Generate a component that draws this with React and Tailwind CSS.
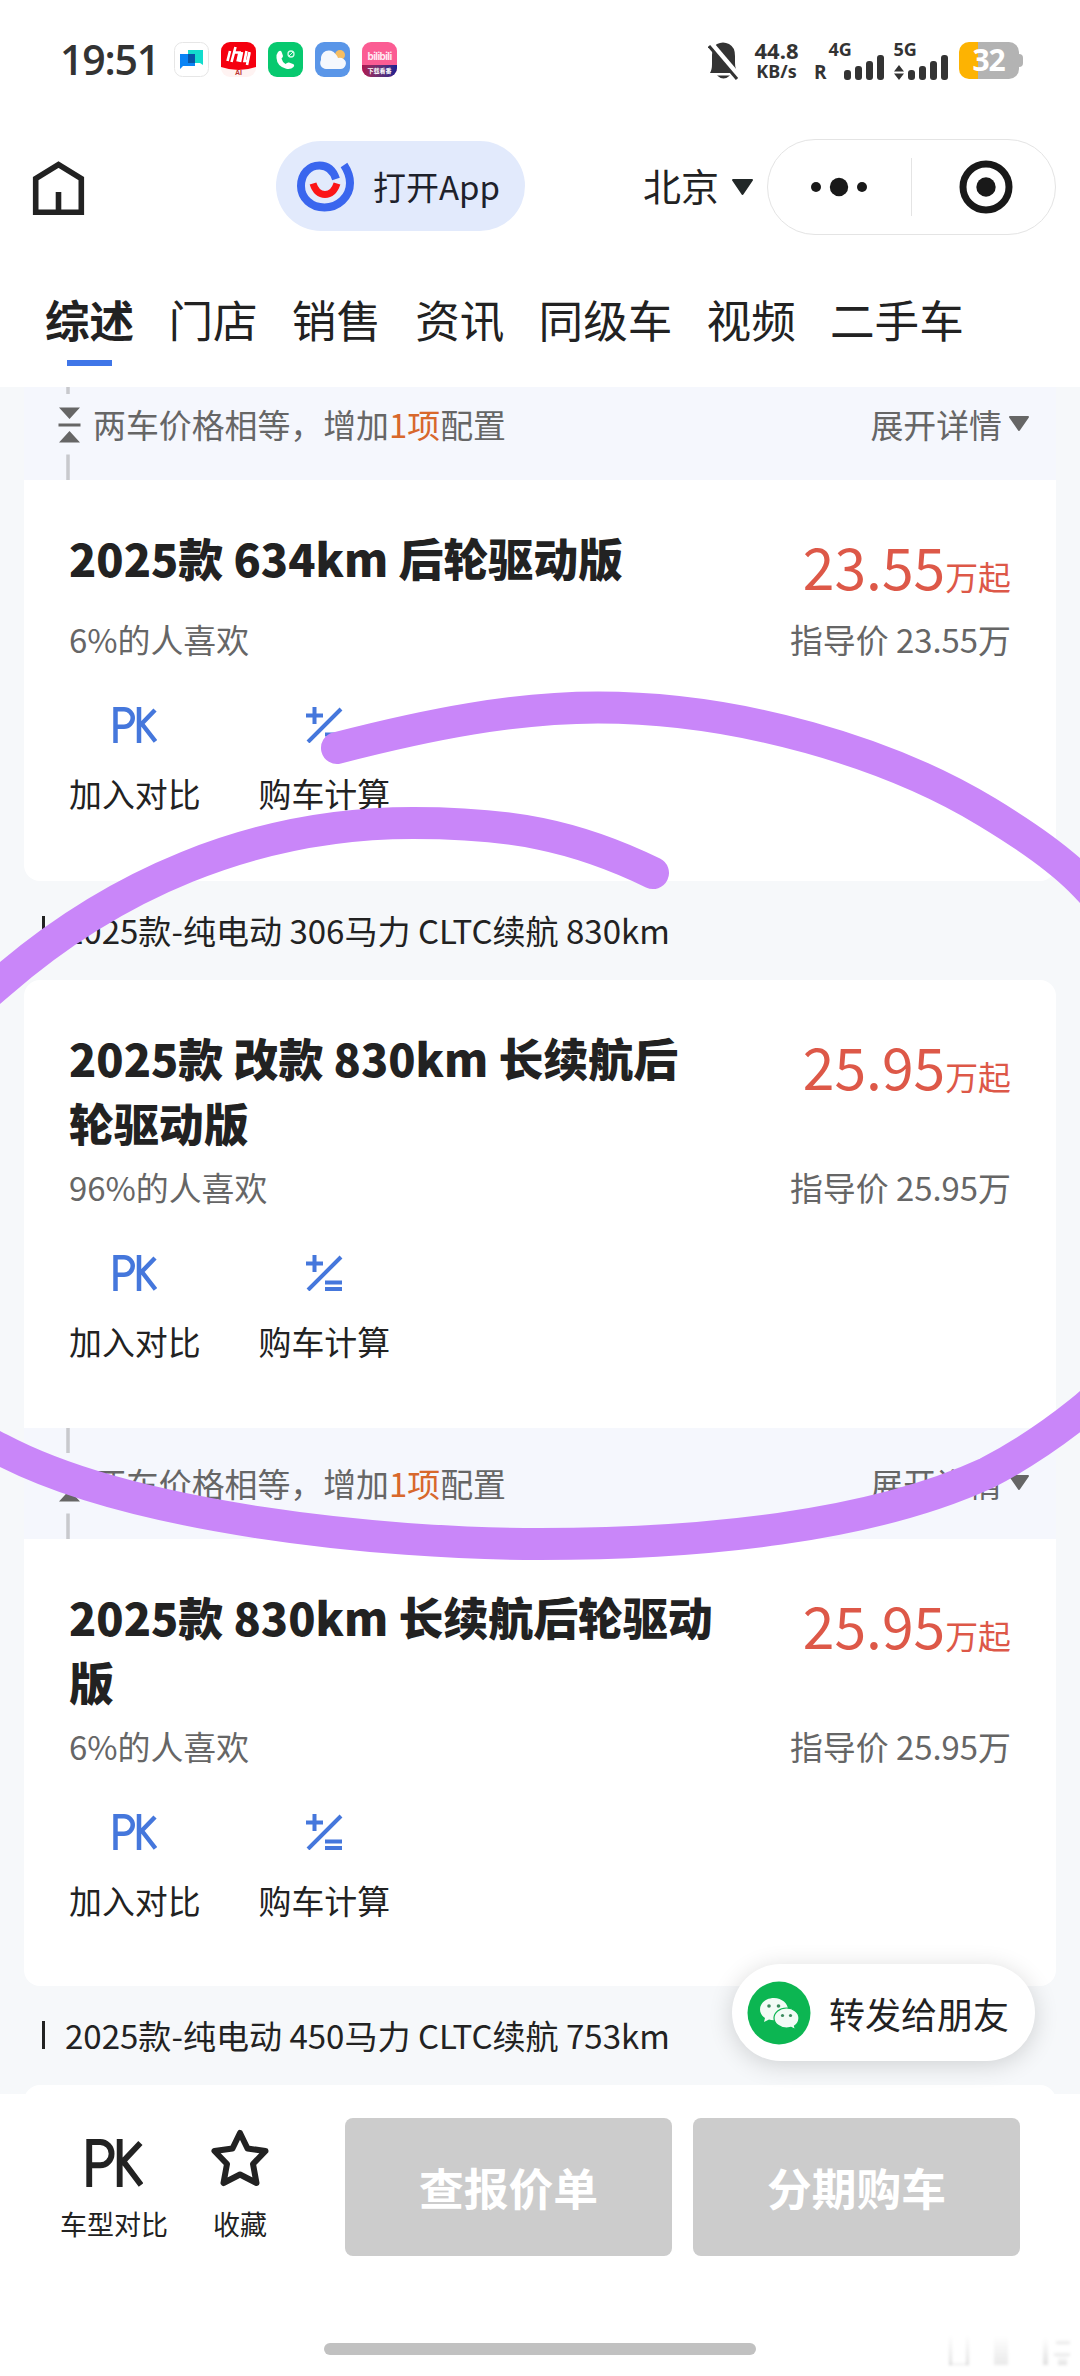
import React from "react";

const GRAY_TEXT = "text-[#666]";

function SignalBars() {
  return (
    <svg width="40" height="25" viewBox="0 0 40 25" fill="#333">
      <rect y="15" width="7" height="10" rx="3" />
      <rect x="11" y="11" width="7" height="14" rx="3" />
      <rect x="22" y="6" width="7" height="19" rx="3" />
      <rect x="33" width="7" height="25" rx="3" />
    </svg>
  );
}

function StatusBar() {
  return (
    <div className="flex h-[118px] items-start pl-[60px] pt-[38px] text-[#333]">
      <div className="w-[100px] whitespace-nowrap font-['Open_Sans'] text-[41px] font-semibold leading-[42px] tracking-[-1.2px]">19:51</div>
      <div className="ml-[14px] mt-1 flex gap-3">
        <svg width="35" height="35" viewBox="0 0 35 35">
          <rect x=".5" y=".5" width="34" height="34" rx="8" fill="#fff" stroke="#e6e6e6" />
          <path d="M14 8h15v15l-3-2H14z" fill="#13dccd" />
          <path d="M6 12h15v12H9l-3 3z" fill="#0a84f5" />
          <path d="M14 12h7v9h-7z" fill="#0756a8" />
        </svg>
        <div className="relative h-[35px] w-[35px] overflow-hidden rounded-[9px]">
          <svg width="35" height="35" viewBox="0 0 35 35">
            <rect width="35" height="35" fill="#fff3f2" />
            <path d="M0 0h35v25q-17.500 6-35 0z" fill="#f5000f" />
            <path d="M9 9L6.500 19M14.500 5l-4 15M13.500 10.500h5l-2 9M21 10l-2 10M25.500 9l-2 10h3l2-9M28.500 11l-2.500 12" stroke="#fff" strokeWidth="2.600" fill="none" />
          </svg>
          <span className="absolute inset-x-0 bottom-0 text-center font-['Liberation_Sans'] text-[7px] font-bold leading-[8px] text-[#b33]">AI</span>
        </div>
        <svg width="35" height="35" viewBox="0 0 35 35">
          <rect width="35" height="35" rx="9" fill="#07c96f" />
          <path d="M10 10q3-3 4 1l1 3q0 1-1.500 2.500 1 4 4 5.500 2-2 3.500-1.500l4 1.500q2 1 .5 3-3 3-8 1.500Q9 24 8.500 16q-.2-4 1.500-6z" fill="#fff" />
          <circle cx="23" cy="12" r="3" fill="none" stroke="#d6fbe8" strokeWidth="1.300" />
          <path d="M21 14l4-4" stroke="#d6fbe8" />
        </svg>
        <svg width="35" height="35" viewBox="0 0 35 35">
          <rect width="35" height="35" rx="9" fill="#5a96e8" />
          <circle cx="25" cy="13" r="5" fill="#f5bd62" />
          <path d="M11 27a6 6 0 0 1-5-9 8 8 0 0 1 14.500-6q2 2 2.500 4 3-1 5.500 1a5.500 5.500 0 0 1-3.500 10z" fill="#f5f8fd" />
        </svg>
        <div className="flex h-[35px] w-[35px] flex-col items-center overflow-hidden rounded-[9px] bg-[#fb5c93]">
          <span className="mt-[7px] font-['Inter'] text-[10px] font-bold leading-[15px] tracking-[-0.6px] text-[#ffe9f1]">bilibili</span>
          <span className="mt-px w-full bg-linear-to-r from-[#b0104f] to-[#1c1c90] text-center text-[6px] font-bold leading-[12px] text-white">下载看番</span>
        </div>
      </div>
      <svg className="ml-[311px] mt-1" width="32" height="38" viewBox="0 0 32 38" fill="#333">
        <path d="M2 31h28q-3-4-3-10v-7q0-9-6-12-6-3-12 0Q4 5 4 13v9q0 6-2 9zM9 33.500h13q-6.500 6-13 0z" />
        <path d="M3 2l29 34" stroke="#fff" strokeWidth="6" />
        <path d="M1 4l28 33" stroke="#333" strokeWidth="3" />
      </svg>
      <div className="ml-3 flex w-[49px] flex-col items-center font-['Noto_Sans'] font-bold">
        <span className="text-[22px] leading-[24px]">44.8</span>
        <span className="text-[18px] leading-[18px]">KB/s</span>
      </div>
      <span className="ml-[13px] mt-[24px] font-['Open_Sans'] text-[19px] font-bold leading-[20px]">R</span>
      <div className="ml-[2px] mt-[3px] flex w-[56px] flex-col font-['Open_Sans'] font-bold">
        <span className="h-[14px] text-[18px] leading-[17px]">4G</span>
        <span className="ml-[15px]"><SignalBars /></span>
      </div>
      <div className="ml-[9px] mt-[3px] flex w-[56px] flex-col font-['Open_Sans'] font-bold">
        <span className="h-[14px] text-[18px] leading-[17px]">5G</span>
        <span className="flex items-end gap-1">
          <svg width="10" height="25" viewBox="0 0 10 25" fill="#333"><path d="M5 10l5 6.500H0zM5 25l5-6.500H0z" /></svg>
          <SignalBars />
        </span>
      </div>
      <div className="ml-[9px] mt-1 flex items-center">
        <div className="h-[37px] w-[60px] rounded-[10px] bg-linear-to-r from-[#fdb302] from-[32%] to-[#b3b3b3] to-[32%] text-center font-['Open_Sans'] text-[30px] font-bold leading-[36px] tracking-[-1px] text-white">32</div>
        <div className="h-[13px] w-1 rounded-r-full bg-[#b3b3b3]" />
      </div>
    </div>
  );
}

function NavBar() {
  return (
    <div className="flex h-[138px] items-start pl-8">
      <svg className="mt-[42px]" width="54" height="56" viewBox="0 0 54 56">
        <path d="M3.700 52.200V18.500L26.500 4.500l22.800 14v33.700zM26.500 52V32" fill="none" stroke="#222" strokeWidth="5.600" />
      </svg>
      <div className="ml-[190px] mt-[23px] flex h-[90px] w-[249px] items-center rounded-full bg-[#e2eafc] pl-[20px]">
        <svg width="60" height="54" viewBox="0 0 60 54">
          <path d="M40 20C37 11 31 6.500 23.500 6.500 13 6.500 5 15 5 27c0 12 10 21.500 23.500 21.500S54 38 54 24q0-9-6-18" fill="none" stroke="#3a66ee" strokeWidth="8" />
          <path d="M17 24.500q3.500 11 12 11t12-11" fill="none" stroke="#fb1417" strokeWidth="7" />
        </svg>
        <span className="ml-[17px] text-[33px] leading-[48px] text-[#1d212b]">打开App</span>
      </div>
      <span className="ml-[118px] mt-[41px] text-[38px] leading-[52px] text-[#222]">北京</span>
      <svg className="ml-3 mt-[61px]" width="23" height="17" viewBox="0 0 23 17">
        <path d="M2 1h19L11.500 15z" fill="#222828" stroke="#222828" strokeWidth="2" strokeLinejoin="round" />
      </svg>
      <div className="ml-[13px] mt-[21px] flex h-[96px] w-[289px] items-center rounded-full border border-[#e4e4e4]">
        <svg className="ml-[42px]" width="58" height="20" viewBox="0 0 58 20" fill="#191919">
          <circle cx="6" cy="10" r="5" /><circle cx="29" cy="10" r="9.200" /><circle cx="52" cy="10" r="5" />
        </svg>
        <div className="ml-[43px] h-[58px] w-px bg-[#e4e4e4]" />
        <svg className="ml-[46px]" width="56" height="56" viewBox="0 0 56 56">
          <circle cx="28" cy="28" r="23" fill="none" stroke="#191919" strokeWidth="7" />
          <circle cx="28" cy="28" r="9.700" fill="#191919" />
        </svg>
      </div>
    </div>
  );
}

const tabs = ["门店", "销售", "资讯", "同级车", "视频", "二手车"];

function Tabs() {
  return (
    <div className="flex h-[131px] items-start gap-[34.200px] pl-[45px] pt-[31px] text-[44.600px] leading-[64px] text-[#222]">
      <div className="flex flex-col items-center font-bold">
        综述
        <span className="mt-[9px] h-1.5 w-[45px] bg-[#3f76e8]" />
      </div>
      {tabs.map((t) => <div key={t}>{t}</div>)}
    </div>
  );
}

function DiffRow() {
  return (
    <div className={`mx-6 flex h-[111px] shrink-0 items-start bg-[#f5f7fd] pr-[26px] text-[32.900px] leading-[48px] ${GRAY_TEXT}`}>
      <svg className="ml-[34px]" width="23" height="111" viewBox="0 0 23 111">
        <path d="M10 0v25M10 85.500V111" stroke="#c8c9cd" strokeWidth="3.500" />
        <path d="M1 38.500h21L11.500 50zM1 73.500h21L11.500 62zM.5 54.500h22v3H.5z" fill="#666" />
      </svg>
      <span className="ml-3 mt-[31px]">两车价格相等，增加<span className="text-[#d8682c]">1项</span>配置</span>
      <span className="ml-auto mt-[31px]">展开详情</span>
      <svg className="ml-1.5 mt-[47px]" width="22" height="16" viewBox="0 0 22 16">
        <path d="M2 1h18l-9 13z" fill="#666" stroke="#666" strokeWidth="2" strokeLinejoin="round" />
      </svg>
    </div>
  );
}

function PkIcon({ className, width, height }) {
  return (
    <svg className={className} width={width} height={height} viewBox="0 0 44 36" preserveAspectRatio="none" fill="none" stroke="currentColor" strokeWidth="4.500">
      <path d="M2.500 36V2.250H11a8.500 8.500 0 0 1 0 17.500H3M26 0v36M42 3L27 18.500M29 17l13.500 17.500" />
    </svg>
  );
}

function CarCard({ title, like, price, shape }) {
  return (
    <div className={`mx-6 shrink-0 bg-white px-[45px] pt-[45px] ${shape}`}>
      <div className="flex items-start justify-between">
        <div className="min-h-[82px] w-[665px] whitespace-pre-line text-[44.900px] font-black leading-[65px] text-[#222]">{title}</div>
        <div className="mt-[2px] flex items-baseline whitespace-nowrap text-[#dd5848]">
          <span className="text-[57px] leading-[76px]">{price}</span>
          <span className="text-[32.900px] leading-[48px]">万起</span>
        </div>
      </div>
      <div className={`mt-2 flex justify-between text-[32.900px] leading-[48px] ${GRAY_TEXT}`}>
        <span>{like}%的人喜欢</span>
        <span>指导价 {price}万</span>
      </div>
      <div className="mt-[44px] flex gap-[58px] text-[32.900px] leading-[48px] text-[#222]">
        <div className="flex flex-col items-center">
          <PkIcon className="text-[#4577dc]" width="44" height="36" />
          <span className="mt-[26px]">加入对比</span>
        </div>
        <div className="flex flex-col items-center">
          <svg width="37" height="36" viewBox="0 0 37 36" fill="none" stroke="#4577dc" strokeWidth="4">
            <path d="M0 8.500h17M8.500 0v17M35 2L2 35M19 27.500h17M19 34h17" />
          </svg>
          <span className="mt-[26px]">购车计算</span>
        </div>
      </div>
    </div>
  );
}

function GroupHeader({ text }) {
  return (
    <div className="flex h-[99px] shrink-0 items-center pb-0.5 pl-[42px]">
      <span className="h-[28px] w-[3px] bg-[#222]" />
      <span className="ml-[20px] text-[33.050px] leading-[48px] text-[#222]">{text}</span>
    </div>
  );
}

function BottomBar() {
  return (
    <div className="flex h-[282px] shrink-0 flex-col bg-white">
      <div className="flex items-start pl-[60px] pt-6 text-[27px] leading-[40px] text-[#222]">
        <div className="flex w-[108px] flex-col items-center pt-[21px]">
          <PkIcon width="57" height="48" />
          <span className="mt-[17px]">车型对比</span>
        </div>
        <div className="ml-[43px] flex w-[58px] flex-col items-center pt-[11px]">
          <svg width="58" height="58" viewBox="0 0 58 58">
            <path d="M29 4l7.500 15.500 18 2.500L42 35l3.500 19L29 45.500 12.500 54 16 35 3.500 22l18-2.500z" fill="none" stroke="#222" strokeWidth="6" strokeLinejoin="round" />
          </svg>
          <span className="mt-[17px]">收藏</span>
        </div>
        <div className="ml-[76px] flex gap-[21px] text-[44.800px] font-bold leading-[138px] text-white">
          <div className="h-[138px] w-[327px] rounded-lg bg-[#ccc] text-center">查报价单</div>
          <div className="h-[138px] w-[327px] rounded-lg bg-[#ccc] text-center">分期购车</div>
        </div>
      </div>
      <div className="mx-auto mt-[87px] h-[12px] w-[432px] rounded-full bg-[#c1c1c1]" />
    </div>
  );
}

function ShareButton() {
  return (
    <div className="absolute left-[732px] top-[1964px] flex h-[97px] w-[303px] items-center rounded-full bg-white pl-[15px] shadow-[0_4px_24px_rgba(0,0,0,0.16)]">
      <svg width="64" height="64" viewBox="0 0 64 64">
        <circle cx="32" cy="32" r="31.500" fill="#0cb652" />
        <path d="M27 17c-8 0-14 5-14 11.500 0 3.500 2 6.500 5 8.500l-1 4 5-2.500q2 .7 5 .7c8 0 14-5 14-10.700S35 17 27 17z" fill="#f2fbf5" />
        <path d="M39.500 27c-7 0-12.500 4.500-12.500 10s5.500 10 12.500 10q2 0 4.500-.7l4.500 2.200-1-3.500c3-2 4.500-5 4.500-8 0-5.500-5.500-10-12.500-10z" fill="#f2fbf5" stroke="#0cb652" strokeWidth="1.200" />
        <g fill="#3a8a5c"><circle cx="22" cy="25" r="1.800" /><circle cx="31.500" cy="25" r="1.800" /><circle cx="35.500" cy="34.500" r="1.600" /><circle cx="43.500" cy="34.500" r="1.600" /></g>
      </svg>
      <span className="ml-[18px] whitespace-nowrap text-[36px] leading-[52px] text-[#222]">转发给朋友</span>
    </div>
  );
}

// Hand-drawn marker loop; it leaves the screen on both sides.
const LOOP =
  "M337 748C430 724 515 707.5 598 707.5C740 707.5 890 753 987 812C1025 835 1056 856 1080 880" +
  "C1160 960 1200 1060 1200 1150C1200 1260 1150 1355 1080 1412C1050 1436 1020 1456 987 1473" +
  "C870 1527 700 1544 540 1544C380 1544 130 1518 0 1449C-80 1408 -150 1330 -150 1240" +
  "C-150 1130 -80 1050 0 983C110 887 250 823 413 823C510 823 575 835 653 873";

export default function App() {
  return (
    <div className="relative flex h-[2376px] w-[1080px] flex-col overflow-hidden bg-white font-['Noto_Sans_CJK_SC',sans-serif]">
      <StatusBar />
      <NavBar />
      <Tabs />
      <div className="flex h-[1707px] shrink-0 flex-col overflow-hidden bg-[#f6f8fa]">
        <div className="-mt-[18px]"><DiffRow /></div>
        <CarCard title="2025款 634km 后轮驱动版" like="6" price="23.55" shape="h-[401px] rounded-b-2xl" />
        <GroupHeader text="2025款-纯电动 306马力 CLTC续航 830km" />
        <CarCard title={"2025款 改款 830km 长续航后\n轮驱动版"} like="96" price="25.95" shape="h-[448px] rounded-t-2xl" />
        <DiffRow />
        <CarCard title={"2025款 830km 长续航后轮驱动\n版"} like="6" price="25.95" shape="h-[447px] rounded-b-2xl" />
        <GroupHeader text="2025款-纯电动 450马力 CLTC续航 753km" />
        <div className="mx-6 h-[40px] shrink-0 rounded-t-2xl bg-white" />
      </div>
      <BottomBar />
      <svg className="pointer-events-none absolute inset-0" width="1080" height="2376" viewBox="0 0 1080 2376">
        <path d={LOOP} fill="none" stroke="#c986f9" strokeWidth="32" strokeLinecap="round" strokeLinejoin="round" />
      </svg>
      <ShareButton />
      {/* Faint residue in the bottom corner */}
      <svg className="absolute bottom-[8px] right-[8px]" width="126" height="36" viewBox="0 0 126 36" fill="none">
        <defs>
          <linearGradient id="fade" x1="0" y1="0" x2="0" y2="1">
            <stop offset="0" stopColor="#000" stopOpacity="0" />
            <stop offset="1" stopColor="#000" stopOpacity=".12" />
          </linearGradient>
          <filter id="soft"><feGaussianBlur stdDeviation="1.800" /></filter>
        </defs>
        <g filter="url(#soft)" fill="url(#fade)">
          <rect x="3" y="2" width="3" height="31" /><rect x="20" y="2" width="3" height="31" /><rect x="3" y="31" width="19" height="2" />
          <rect x="48" y="4" width="14" height="29" fillOpacity=".7" />
          <rect x="97" y="6" width="5" height="27" /><rect x="110" y="8" width="14" height="4" /><rect x="108" y="20" width="16" height="4" /><rect x="112" y="24" width="9" height="9" />
        </g>
      </svg>
    </div>
  );
}
